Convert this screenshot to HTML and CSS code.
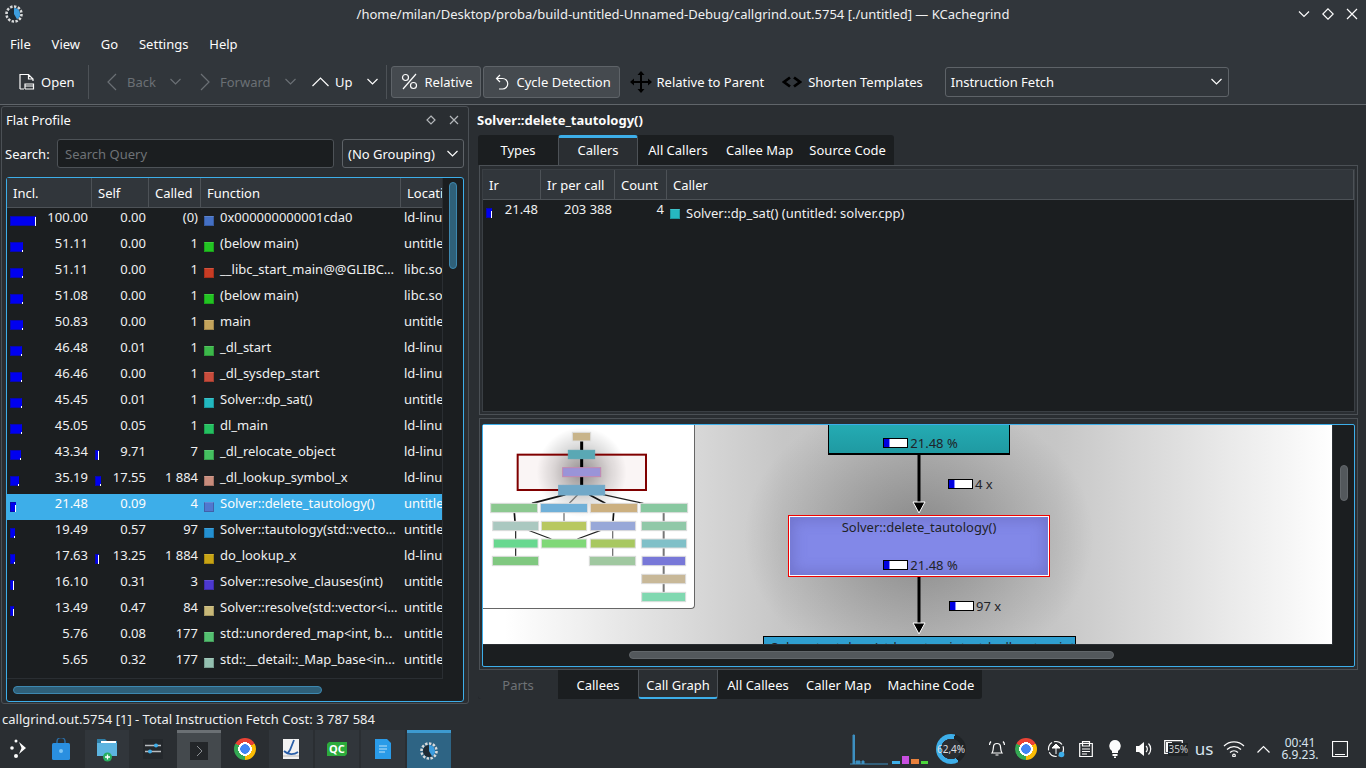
FILE: index.html
```html
<!DOCTYPE html>
<html lang="en">
<head>
    <meta charset="UTF-8">
    <title>KCachegrind</title>
    <link rel="stylesheet" href="styles.css">
</head>
<body>
    <header class="titlebar">
        <svg class="app-logo" width="20" height="20" viewBox="0 0 20 20">
            <circle cx="10" cy="10" r="7.5" fill="none" stroke="#d8dadb" stroke-width="2.6" stroke-dasharray="2.4 1.5"/>
            <circle cx="10" cy="10" r="6" fill="#1f2a33"/>
            <path d="M10 10V4a6 6 0 0 1 3 11.2z" fill="#3d9ee0"/>
        </svg>
        <div class="window-title">/home/milan/Desktop/proba/build-untitled-Unnamed-Debug/callgrind.out.5754 [./untitled] — KCachegrind</div>
        <div class="window-buttons">
            <svg width="12" height="12" viewBox="0 0 12 12"><path d="M1 3.5l5 5 5-5" class="line"/></svg>
            <svg width="12" height="12" viewBox="0 0 12 12"><path d="M6 .8L11.2 6 6 11.2.8 6z" class="line"/></svg>
            <svg width="12" height="12" viewBox="0 0 12 12"><path d="M1 1l10 10M11 1L1 11" class="line"/></svg>
        </div>
    </header>

    <nav class="menubar">
        <span>File</span><span>View</span><span>Go</span><span>Settings</span><span>Help</span>
    </nav>

    <div class="toolbar">
        <div class="tool tool-open">
            <svg width="16" height="18" viewBox="0 0 16 18"><path d="M1 16V1.500H9.500L14 6V8M9.500 1.500V6H14M1 16H5M6 16V11H14.500V16H6M6 13H14.500" class="line"/></svg>
            <span>Open</span>
        </div>
        <div class="tool-sep"></div>
        <div class="tool tool-back disabled">
            <svg width="12" height="18" viewBox="0 0 12 18"><path d="M9 1L1 9l8 8" class="line"/></svg>
            <span>Back</span>
            <svg class="drop" width="11" height="7" viewBox="0 0 11 7"><path d="M.5 1l5 5 5-5" class="line"/></svg>
        </div>
        <div class="tool tool-forward disabled">
            <svg width="12" height="18" viewBox="0 0 12 18"><path d="M1 1l8 8-8 8" class="line"/></svg>
            <span>Forward</span>
            <svg class="drop" width="11" height="7" viewBox="0 0 11 7"><path d="M.5 1l5 5 5-5" class="line"/></svg>
        </div>
        <div class="tool tool-up">
            <svg width="17" height="10" viewBox="0 0 17 10"><path d="M.5 9l8-8 8 8" class="line"/></svg>
            <span>Up</span>
            <svg class="drop" width="11" height="7" viewBox="0 0 11 7"><path d="M.5 1l5 5 5-5" class="line"/></svg>
        </div>
        <div class="tool-sep sep-second"></div>
        <div class="tool-toggle toggle-relative">
            <svg width="17" height="17" viewBox="0 0 17 17"><path d="M15 1L2 16" class="line"/><circle cx="4.500" cy="4.500" r="3" class="line"/><circle cx="12.500" cy="12.500" r="3" class="line"/></svg>
            <span>Relative</span>
        </div>
        <div class="tool-toggle toggle-cycle">
            <svg width="14" height="16" viewBox="0 0 14 16"><path d="M5 1L1.500 4.500 5 8M2 4.500H7.500a5 5 0 0 1 0 10.500H4" class="line"/></svg>
            <span>Cycle Detection</span>
        </div>
        <div class="tool tool-move">
            <svg width="22" height="22" viewBox="0 0 22 22"><path d="M11 2V20M2 11H20" class="dark-line"/><path d="M11 0l3.500 4h-7zM11 22l3.500-4h-7zM0 11l4-3.500v7zM22 11l-4-3.500v7z"/></svg>
            <span>Relative to Parent</span>
        </div>
        <div class="tool tool-shorten">
            <svg width="20" height="12" viewBox="0 0 20 12"><path d="M8 1.500L2 6l6 4.500M12 1.500L18 6l-6 4.500" class="dark-line bold-line"/></svg>
            <span>Shorten Templates</span>
        </div>
        <div class="combo toolbar-combo">
            <span>Instruction Fetch</span>
            <svg width="11" height="7" viewBox="0 0 11 7"><path d="M.5 1l5 5 5-5" class="line"/></svg>
        </div>
    </div>

    <main class="workspace">
        <section class="dock">
            <div class="dock-title">
                <span>Flat Profile</span>
                <svg width="10" height="10" viewBox="0 0 10 10"><path d="M5 1l4 4-4 4-4-4z" class="line"/></svg>
                <svg width="10" height="10" viewBox="0 0 10 10"><path d="M1 1l8 8M9 1L1 9" class="line"/></svg>
            </div>
            <div class="search-row">
                <label>Search:</label>
                <div class="search-input">Search Query</div>
                <div class="combo group-combo">
                    <span>(No Grouping)</span>
                    <svg width="11" height="7" viewBox="0 0 11 7"><path d="M.5 1l5 5 5-5" class="line"/></svg>
                </div>
            </div>
            <div class="profile-frame">
                <div class="profile-list">
                    <div class="profile-head">
                        <div>Incl.</div><div>Self</div><div>Called</div><div>Function</div><div>Location</div>
                    </div>
                    <div class="profile-row">
                        <div class="num"><i class="bar tip-tall" style="width:26px"></i><span>100.00</span></div>
                        <div class="num"><span>0.00</span></div><div class="num"><span>(0)</span></div>
                        <div class="fn"><i class="swatch" style="background:#4470c4"></i>0x000000000001cda0</div><div class="loc">ld-linux</div>
                    </div>
                    <div class="profile-row">
                        <div class="num"><i class="bar" style="width:13px"></i><span>51.11</span></div>
                        <div class="num"><span>0.00</span></div><div class="num"><span>1</span></div>
                        <div class="fn"><i class="swatch" style="background:#22c422"></i>(below main)</div><div class="loc">untitled</div>
                    </div>
                    <div class="profile-row">
                        <div class="num"><i class="bar" style="width:13px"></i><span>51.11</span></div>
                        <div class="num"><span>0.00</span></div><div class="num"><span>1</span></div>
                        <div class="fn"><i class="swatch" style="background:#c83c24"></i>__libc_start_main@@GLIBC…</div><div class="loc">libc.so</div>
                    </div>
                    <div class="profile-row">
                        <div class="num"><i class="bar" style="width:13px"></i><span>51.08</span></div>
                        <div class="num"><span>0.00</span></div><div class="num"><span>1</span></div>
                        <div class="fn"><i class="swatch" style="background:#22c422"></i>(below main)</div><div class="loc">libc.so</div>
                    </div>
                    <div class="profile-row">
                        <div class="num"><i class="bar" style="width:13px"></i><span>50.83</span></div>
                        <div class="num"><span>0.00</span></div><div class="num"><span>1</span></div>
                        <div class="fn"><i class="swatch" style="background:#c4a45c"></i>main</div><div class="loc">untitled</div>
                    </div>
                    <div class="profile-row">
                        <div class="num"><i class="bar" style="width:12px"></i><span>46.48</span></div>
                        <div class="num"><span>0.01</span></div><div class="num"><span>1</span></div>
                        <div class="fn"><i class="swatch" style="background:#3cb84a"></i>_dl_start</div><div class="loc">ld-linux</div>
                    </div>
                    <div class="profile-row">
                        <div class="num"><i class="bar" style="width:12px"></i><span>46.46</span></div>
                        <div class="num"><span>0.00</span></div><div class="num"><span>1</span></div>
                        <div class="fn"><i class="swatch" style="background:#c84c3c"></i>_dl_sysdep_start</div><div class="loc">ld-linux</div>
                    </div>
                    <div class="profile-row">
                        <div class="num"><i class="bar" style="width:12px"></i><span>45.45</span></div>
                        <div class="num"><span>0.01</span></div><div class="num"><span>1</span></div>
                        <div class="fn"><i class="swatch" style="background:#22b8c0"></i>Solver::dp_sat()</div><div class="loc">untitled</div>
                    </div>
                    <div class="profile-row">
                        <div class="num"><i class="bar" style="width:12px"></i><span>45.05</span></div>
                        <div class="num"><span>0.05</span></div><div class="num"><span>1</span></div>
                        <div class="fn"><i class="swatch" style="background:#24c060"></i>dl_main</div><div class="loc">ld-linux</div>
                    </div>
                    <div class="profile-row">
                        <div class="num"><i class="bar" style="width:11px"></i><span>43.34</span></div>
                        <div class="num"><i class="bar tip-tall" style="width:4px"></i><span>9.71</span></div><div class="num"><span>7</span></div>
                        <div class="fn"><i class="swatch" style="background:#44c060"></i>_dl_relocate_object</div><div class="loc">ld-linux</div>
                    </div>
                    <div class="profile-row">
                        <div class="num"><i class="bar" style="width:9px"></i><span>35.19</span></div>
                        <div class="num"><i class="bar" style="width:6px"></i><span>17.55</span></div><div class="num"><span>1 884</span></div>
                        <div class="fn"><i class="swatch" style="background:#c88c7c"></i>_dl_lookup_symbol_x</div><div class="loc">ld-linux</div>
                    </div>
                    <div class="profile-row selected">
                        <div class="num"><i class="bar tip-mid" style="width:6px"></i><span>21.48</span></div>
                        <div class="num"><span>0.09</span></div><div class="num"><span>4</span></div>
                        <div class="fn"><i class="swatch" style="background:#5078d0"></i>Solver::delete_tautology()</div><div class="loc">untitled</div>
                    </div>
                    <div class="profile-row">
                        <div class="num"><i class="bar" style="width:5px"></i><span>19.49</span></div>
                        <div class="num"><span>0.57</span></div><div class="num"><span>97</span></div>
                        <div class="fn"><i class="swatch" style="background:#2490d0"></i>Solver::tautology(std::vecto…</div><div class="loc">untitled</div>
                    </div>
                    <div class="profile-row">
                        <div class="num"><i class="bar" style="width:5px"></i><span>17.63</span></div>
                        <div class="num"><i class="bar tip-tall" style="width:4px"></i><span>13.25</span></div><div class="num"><span>1 884</span></div>
                        <div class="fn"><i class="swatch" style="background:#c8a414"></i>do_lookup_x</div><div class="loc">ld-linux</div>
                    </div>
                    <div class="profile-row">
                        <div class="num"><i class="bar tip-tall" style="width:4px"></i><span>16.10</span></div>
                        <div class="num"><span>0.31</span></div><div class="num"><span>3</span></div>
                        <div class="fn"><i class="swatch" style="background:#4c38d0"></i>Solver::resolve_clauses(int)</div><div class="loc">untitled</div>
                    </div>
                    <div class="profile-row">
                        <div class="num"><i class="bar tip-mid" style="width:4px"></i><span>13.49</span></div>
                        <div class="num"><span>0.47</span></div><div class="num"><span>84</span></div>
                        <div class="fn"><i class="swatch" style="background:#c8b878"></i>Solver::resolve(std::vector&lt;i…</div><div class="loc">untitled</div>
                    </div>
                    <div class="profile-row">
                        <div class="num"><span>5.76</span></div>
                        <div class="num"><span>0.08</span></div><div class="num"><span>177</span></div>
                        <div class="fn"><i class="swatch" style="background:#54c070"></i>std::unordered_map&lt;int, b…</div><div class="loc">untitled</div>
                    </div>
                    <div class="profile-row">
                        <div class="num"><span>5.65</span></div>
                        <div class="num"><span>0.32</span></div><div class="num"><span>177</span></div>
                        <div class="fn"><i class="swatch" style="background:#94c0b0"></i>std::__detail::_Map_base&lt;in…</div><div class="loc">untitled</div>
                    </div>
                </div>
                <div class="profile-vscroll"><div class="thumb-blue"></div></div>
                <div class="profile-hscroll"><div class="thumb-blue"></div></div>
            </div>
        </section>

        <section class="details">
            <div class="details-title">Solver::delete_tautology()</div>
            <div class="tabs tabs-top">
                <div class="tab">Types</div>
                <div class="tab active">Callers</div>
                <div class="tab">All Callers</div>
                <div class="tab">Callee Map</div>
                <div class="tab">Source Code</div>
            </div>
            <div class="panel panel-callers">
                <div class="callers-list">
                    <div class="callers-head">
                        <div>Ir</div><div>Ir per call</div><div>Count</div><div>Caller</div>
                    </div>
                    <div class="callers-row">
                        <div class="num"><i class="bar tip-mid" style="width:6px"></i><span>21.48</span></div>
                        <div class="num"><span>203 388</span></div>
                        <div class="num"><span>4</span></div>
                        <div class="caller-fn"><i class="swatch" style="background:#26b8c0"></i>Solver::dp_sat() (untitled: solver.cpp)</div>
                    </div>
                </div>
            </div>
            <div class="panel panel-graph">
                <div class="graph-frame">
                    <div class="graph-view">
                        <div class="gnode gnode-top">
                            <div class="cost"><i class="cost-bar"><b></b></i>21.48 %</div>
                        </div>
                        <svg class="gedge edge-one" width="16" height="60" viewBox="0 0 16 60"><path d="M8 0V50" stroke="#000" stroke-width="3"/><path d="M2 47h12L8 58z" stroke="#fff" stroke-width="1"/></svg>
                        <div class="glabel label-one"><i class="cost-bar"><b></b></i>4 x</div>
                        <div class="gnode gnode-main">
                            <div class="gnode-name">Solver::delete_tautology()</div>
                            <div class="cost"><i class="cost-bar"><b></b></i>21.48 %</div>
                        </div>
                        <svg class="gedge edge-two" width="16" height="59" viewBox="0 0 16 59"><path d="M8 0V48" stroke="#000" stroke-width="3"/><path d="M2 46h12L8 57z" stroke="#fff" stroke-width="1"/></svg>
                        <div class="glabel label-two"><i class="cost-bar"><b></b></i>97 x</div>
                        <div class="gnode gnode-bottom">
                            <div class="gnode-name">Solver::tautology(std::vector&lt;int, std::allocator&lt;int&gt;&gt;)</div>
                        </div>
                        <div class="birdseye">
                            <svg width="211" height="183" viewBox="9 15 633 549">
                                <defs>
                                    <radialGradient id="glow"><stop offset="0" stop-color="#000" stop-opacity=".42"/><stop offset=".6" stop-color="#000" stop-opacity=".14"/><stop offset="1" stop-color="#000" stop-opacity="0"/></radialGradient>
                                </defs>
                                <circle cx="305" cy="157" r="135" fill="url(#glow)"/>
                                <rect x="113" y="104" width="385" height="106" fill="#800000" fill-opacity=".04" stroke="#800000" stroke-width="6"/>
                                <g class="mini-graph">
                                    <path d="M305 63V91M305 116V143M305 170V196" stroke="#000" stroke-width="9"/>
                                    <path d="M256 224L156 250M328 224L376 250M103 278L105 304M401 278L399 304" stroke="#111" stroke-width="5"/>
                                    <path d="M370 224L490 250M107 332V357M143 330L214 357M362 331L292 357M107 384V409" stroke="#222" stroke-width="3.500"/>
                                    <path d="M293 224L268 250M252 278V304M398 332V357M398 384V409" stroke="#777" stroke-width="4"/>
                                    <path d="M551 278V517" stroke="#777" stroke-width="6"/>
                                    <g stroke="#ddd" stroke-width="3">
                                        <rect x="277" y="37" width="55" height="26" fill="#c8b48a"/>
                                        <rect x="265" y="91" width="79" height="25" fill="#5aa8b4" stroke="#5aa8b4"/>
                                        <rect x="248" y="143" width="114" height="27" fill="#9a94d8" stroke="#c488b0"/>
                                        <rect x="236" y="196" width="138" height="29" fill="#70a8c8" stroke="#70a8c8"/>
                                        <rect x="32" y="250" width="141" height="28" fill="#8cc890"/>
                                        <rect x="181" y="250" width="142" height="28" fill="#70b0d8"/>
                                        <rect x="331" y="250" width="142" height="28" fill="#ccb080"/>
                                        <rect x="481" y="250" width="142" height="28" fill="#88c8a0"/>
                                        <rect x="38" y="304" width="138" height="28" fill="#aac8c0"/>
                                        <rect x="184" y="304" width="136" height="28" fill="#b8c860"/>
                                        <rect x="331" y="304" width="136" height="28" fill="#98a8d8"/>
                                        <rect x="484" y="304" width="136" height="28" fill="#90c8a8"/>
                                        <rect x="40" y="357" width="134" height="27" fill="#68d890"/>
                                        <rect x="184" y="357" width="136" height="27" fill="#80d878"/>
                                        <rect x="331" y="357" width="135" height="27" fill="#a8c860"/>
                                        <rect x="484" y="357" width="136" height="27" fill="#80c0c8"/>
                                        <rect x="37" y="409" width="139" height="28" fill="#80c880"/>
                                        <rect x="328" y="409" width="139" height="28" fill="#a0c8a0"/>
                                        <rect x="486" y="409" width="131" height="28" fill="#7878d8"/>
                                        <rect x="485" y="463" width="132" height="28" fill="#c8b898"/>
                                        <rect x="485" y="517" width="132" height="28" fill="#80d8b0"/>
                                    </g>
                                </g>
                            </svg>
                        </div>
                    </div>
                    <div class="graph-vscroll"><div class="thumb-gray"></div></div>
                    <div class="graph-hscroll"><div class="thumb-gray"></div></div>
                </div>
            </div>
            <div class="tabs tabs-bottom">
                <div class="tab disabled">Parts</div>
                <div class="tab">Callees</div>
                <div class="tab active">Call Graph</div>
                <div class="tab">All Callees</div>
                <div class="tab">Caller Map</div>
                <div class="tab">Machine Code</div>
            </div>
        </section>
    </main>

    <div class="statusbar">callgrind.out.5754 [1] - Total Instruction Fetch Cost: 3 787 584</div>

    <footer class="taskbar">
        <div class="launcher">
            <svg width="18" height="22" viewBox="0 0 18 22" fill="#fcfcfc"><circle cx="3" cy="10" r="1.800"/><circle cx="7" cy="3" r="1.500"/><circle cx="7" cy="18" r="2"/><path d="M10 4l7 6-7 6 2.500-6z"/></svg>
        </div>
        <div class="task">
            <svg width="20" height="22" viewBox="0 0 20 22"><path d="M6 6V3.500a4 4 0 0 1 8 0V6" fill="none" stroke="#2a6fa8" stroke-width="1.500"/><rect x="1" y="5" width="18" height="17" rx="1.500" fill="#2a8fe0"/><circle cx="10" cy="13" r="2" fill="#7cc4f4"/></svg>
        </div>
        <div class="task tile">
            <svg width="22" height="26" viewBox="0 0 22 26"><path d="M1 3h8l2 2h10v15H1z" fill="#2f7fa8"/><rect x="1" y="7" width="20" height="13" fill="#5cb4e0"/><rect x="5" y="5" width="15" height="2" fill="#fff"/><circle cx="11.500" cy="21" r="4.500" fill="#27ae60"/><path d="M11.500 18.500v5M9 21h5" stroke="#fff" stroke-width="1.300"/></svg>
        </div>
        <div class="task">
            <svg width="20" height="20" viewBox="0 0 20 20"><rect width="20" height="20" fill="#24282c"/><path d="M2 6.500H18M2 12.500H18" stroke="#b8bcc0" stroke-width="1.500"/><circle cx="13" cy="6.500" r="2" fill="#3daee9"/><circle cx="7" cy="12.500" r="2" fill="#3daee9"/></svg>
        </div>
        <div class="task tile tile-open">
            <svg width="18" height="18" viewBox="0 0 18 18"><rect width="18" height="18" fill="#232629"/><path d="M7 4l5 5-5 5" fill="none" stroke="#8a8e92"/></svg>
        </div>
        <div class="task"><i class="chrome"></i></div>
        <div class="task tile">
            <svg width="16" height="20" viewBox="0 0 16 20"><rect width="16" height="20" fill="#f2f2f2"/><path d="M11 1L7 11 4 15M1 12c4 4 10 4 14 1" fill="none" stroke="#2a5fa8" stroke-width="1.800"/><path d="M0 17h16" stroke="#b8b8b8"/></svg>
        </div>
        <div class="task tile">
            <svg width="20" height="14" viewBox="0 0 20 14"><path d="M2 0h18v12l-2 2H0V2z" fill="#2caa3c"/><text x="10" y="11" class="qc-text">QC</text></svg>
        </div>
        <div class="task tile">
            <svg width="16" height="20" viewBox="0 0 16 20"><path d="M0 0h12l4 4v16H0z" fill="#2a9be8"/><path d="M4 7h8M4 10h8M4 13h6" stroke="#bfe2f8"/></svg>
        </div>
        <div class="task tile tile-active">
            <svg width="20" height="20" viewBox="0 0 20 20">
                <circle cx="10" cy="10" r="7.500" fill="none" stroke="#d8dadb" stroke-width="2.600" stroke-dasharray="2.400 1.500"/>
                <circle cx="10" cy="10" r="6" fill="#1f2a33"/>
                <path d="M10 10V4a6 6 0 0 1 3 11.200z" fill="#3d9ee0"/>
            </svg>
        </div>

        <div class="tray">
            <svg class="cpu-graph" width="38" height="34" viewBox="0 0 38 34"><path d="M0 32H38M3 32V3h1.500V32M6 32v-3h4v3M12 32v-3h2v3" fill="#3d8fc0" stroke="#3d8fc0"/></svg>
            <div class="mem-bars">
                <i class="mem-blue"></i><i class="mem-pink"></i><i class="mem-orange"></i><i class="mem-green"></i>
            </div>
            <div class="gauge"><span>62,4%</span></div>
            <div class="tray-icons">
                <svg width="16" height="18" viewBox="0 0 16 18"><path d="M3 13c1.500-2 1-4 1.500-6a3.500 3.500 0 0 1 7 0c.5 2 0 4 1.500 6zM6.500 15h3M2 1.500A5 5 0 0 0 .5 5M14 1.500A5 5 0 0 1 15.500 5" class="line"/></svg>
                <i class="chrome"></i>
                <svg width="18" height="18" viewBox="0 0 18 18"><circle cx="9" cy="9" r="7.500" class="line" stroke-dasharray="9 2"/><path d="M9 14V7M9 4l4 4H5z" fill="#fcfcfc" stroke="#fcfcfc"/><circle cx="14.500" cy="14.500" r="2.800" fill="#3daee9"/></svg>
                <svg width="14" height="16" viewBox="0 0 14 16"><path d="M.7 2.500h12.600v13H.7zM3.500 5h7V.7h-7zM3 8h8M3 10.500h8M3 13h5" class="line"/></svg>
                <svg width="12" height="18" viewBox="0 0 12 18" fill="#fcfcfc"><path d="M6 0a6 6 0 0 1 3 11v2H3v-2A6 6 0 0 1 6 0zM3.500 14h5v2h-5zM5 16.500h2V18H5z"/></svg>
                <svg width="17" height="16" viewBox="0 0 17 16"><path d="M0 5h3l5-4v14l-5-4H0z" fill="#fcfcfc"/><path d="M10 5a4 4 0 0 1 0 6M12.500 2.500a8 8 0 0 1 0 11" class="line"/></svg>
                <div class="battery">
                    <svg width="19" height="14" viewBox="0 0 19 14"><path d="M.7.7h17.600v12.600H.7z" class="line"/><rect x="2" y="2" width="6" height="10" fill="#fcfcfc"/></svg>
                    <span>35%</span>
                </div>
                <span class="layout-label">us</span>
                <svg width="22" height="16" viewBox="0 0 22 16"><path d="M1 5a14 14 0 0 1 20 0M4 8.500a10 10 0 0 1 14 0M7 11.500a6 6 0 0 1 8 0" class="line"/><circle cx="11" cy="14.500" r="1.300" class="line"/></svg>
                <svg width="13" height="8" viewBox="0 0 13 8"><path d="M.5 7.500l6-6 6 6" class="line"/></svg>
            </div>
            <div class="clock"><div>00:41</div><div>6.9.23.</div></div>
            <svg class="show-desktop" width="16" height="16" viewBox="0 0 16 16"><path d="M.5.500h15v15H.5zM3 13.500h10" class="line"/></svg>
        </div>
    </footer>
</body>
</html>
```

FILE: styles.css
```css
* {
    box-sizing: border-box;
}
html, body {
    margin: 0;
    height: 768px;
    overflow: hidden;
}
body {
    width: 1366px;
    display: flex;
    flex-direction: column;
    font-family: "Noto Sans", sans-serif;
    font-size: 13px;
    line-height: 18px;
    color: #fcfcfc;
    background: #2a2e32;
}
i {
    display: block;
    font-style: normal;
}
svg {
    display: block;
    flex: none;
}
.line {
    fill: none;
    stroke: #fcfcfc;
    stroke-width: 1.2;
}
.dark-line {
    fill: none;
    stroke: #000;
    stroke-width: 2;
}
.bold-line {
    stroke-width: 2.8;
}

/* title bar */
.titlebar {
    height: 30px;
    display: flex;
    align-items: center;
    padding: 0 8px 2px 4px;
    background: #31363b;
}
.window-title {
    flex: 1;
    text-align: center;
    padding-left: 44px;
    color: #eff0f1;
}
.window-buttons {
    display: flex;
    gap: 12px;
}

/* menu */
.menubar {
    height: 30px;
    display: flex;
    align-items: center;
    padding: 0 0 2px 10px;
    gap: 20.8px;
    background: #31363b;
}

/* toolbar */
.toolbar {
    height: 45px;
    display: flex;
    align-items: center;
    padding: 0 0 1px 19px;
    background: #31363b;
    border-bottom: 1px solid #60656a;
}
.tool {
    display: flex;
    align-items: center;
}
.tool.disabled {
    color: #6b7075;
}
.tool.disabled .line {
    stroke: #6b7075;
}
.tool-open {
    gap: 6px;
    width: 55px;
}
.tool-sep {
    width: 1px;
    height: 34px;
    margin: 0 18px 0 14px;
    background: #4d5257;
}
.tool-back svg:first-child, .tool-forward svg:first-child {
    margin-right: 8px;
}
.tool-back .drop, .tool-forward .drop {
    margin-left: 14px;
}
.tool-back {
    width: 93px;
}
.tool-forward {
    width: 112px;
}
.tool-up {
    gap: 6px;
}
.tool-up .drop {
    margin-left: 8px;
}
.sep-second {
    margin: 0 4px 0 8px;
}
.tool-toggle {
    height: 32px;
    display: flex;
    align-items: center;
    background: #454a4f;
    border: 1px solid #5e6368;
    border-radius: 3px;
}
.toggle-relative {
    width: 90px;
    padding-left: 9px;
    gap: 7px;
}
.toggle-cycle {
    width: 137px;
    margin-left: 2px;
    padding-left: 11px;
    gap: 8px;
}
.tool-move {
    margin-left: 10px;
    gap: 5px;
}
.tool-shorten {
    margin-left: 18px;
    gap: 6px;
}
.combo {
    display: flex;
    align-items: center;
    justify-content: space-between;
    border: 1px solid #5e6368;
    border-radius: 3px;
    background: #31363b;
}
.toolbar-combo {
    width: 284px;
    height: 30px;
    margin-left: 22px;
    padding: 0 6px 0 5px;
}

/* main area */
.workspace {
    height: 603px;
    display: flex;
}
.dock {
    width: 468px;
    height: 598px;
    margin: 1px 0 0 1px;
    display: flex;
    flex-direction: column;
    border: 1px solid #4b5055;
    border-radius: 3px;
}
.dock-title {
    height: 25px;
    display: flex;
    align-items: center;
    gap: 13px;
    padding: 0 9px 0 4px;
}
.dock-title span {
    flex: 1;
}
.dock-title .line {
    stroke: #b4b7ba;
}
.search-row {
    height: 29px;
    margin: 7px 4px 0 3px;
    display: flex;
    align-items: center;
}
.search-input {
    width: 277px;
    height: 29px;
    margin-left: 6px;
    padding: 5px 7px;
    background: #1b1e20;
    color: #6e7276;
    border: 1px solid #4d5257;
    border-radius: 3px;
}
.search-row label {
    width: 46px;
}
.group-combo {
    width: 122px;
    height: 29px;
    margin-left: 8px;
    padding: 0 5px;
    background: #2a2e32;
}
.profile-frame {
    margin: 9px 3px 0 4px;
    width: 458px;
    height: 525px;
    display: grid;
    grid-template-columns: 436px 20px;
    grid-template-rows: 501px 22px;
    background: #1b1e20;
    border: 1px solid #3daee9;
    border-radius: 3px;
}
.profile-list {
    border-right: 1px solid #2a2e32;
    border-bottom: 1px solid #2a2e32;
    overflow: hidden;
}
.profile-head, .profile-row {
    display: grid;
    grid-template-columns: 85px 57px 52px 200px 42px;
}
.profile-head {
    height: 30px;
    background: #31363b;
    border-bottom: 1px solid #4d5257;
}
.profile-head div, .callers-head div {
    padding: 6px 5px 0 6px;
    border-right: 1px solid #4d5257;
    white-space: nowrap;
    overflow: hidden;
}
.profile-head div:last-child {
    padding-right: 0;
}
.profile-row {
    height: 26px;
    color: #eff0f1;
}
.profile-row.selected {
    background: #3daee9;
    color: #fcfcfc;
}
.num {
    display: flex;
    justify-content: space-between;
    padding: 0 3px;
}
.profile-row .num:first-child {
    padding-right: 4px;
}
.num span {
    margin-left: auto;
    white-space: nowrap;
}
.bar {
    position: relative;
    height: 10px;
    margin-top: 8px;
    background: #0000f0;
    border: 1px solid #0808b0;
    border-right-color: #0000f0;
    flex: none;
}
.bar::after {
    content: "";
    position: absolute;
    right: -1px;
    bottom: -1px;
    width: 1px;
    height: 2px;
    background: #fff;
}
.bar.tip-mid::after {
    height: 7px;
}
.bar.tip-tall::after {
    height: 9px;
}
.fn, .caller-fn {
    display: flex;
    padding-left: 3px;
    white-space: nowrap;
    overflow: hidden;
}
.swatch {
    flex: none;
    width: 10px;
    height: 10px;
    margin: 8px 6px 0 0;
    border: 1px solid rgba(0, 0, 0, 0.18);
    border-top-color: rgba(255, 255, 255, 0.12);
}
.loc {
    padding-left: 3px;
    white-space: nowrap;
    overflow: hidden;
}
.profile-vscroll {
    padding: 4px 0 0 6px;
    grid-row: 1 / 3;
    grid-column: 2;
}
.profile-vscroll .thumb-blue {
    width: 8px;
    height: 87px;
}
.profile-hscroll {
    padding: 7px 0 0 6px;
}
.profile-hscroll .thumb-blue {
    width: 309px;
    height: 8px;
}
.thumb-blue {
    background: #2f6079;
    border: 1px solid #3d88b0;
    border-radius: 4px;
}

/* right side */
.details {
    flex: 1;
    padding: 0 8px 0 9px;
    min-width: 0;
}
.details-title {
    height: 30px;
    padding-top: 6px;
    font-weight: 700;
    margin-left: -1px;
}
.tabs {
    display: flex;
    width: max-content;
    height: 30px;
    background: #1b1e20;
}
.tabs-top {
    border-radius: 3px 3px 0 0;
}
.tabs-bottom {
    height: 29px;
    border-radius: 0 0 3px 3px;
}
.tab {
    min-width: 80px;
    padding: 6px 8px 0;
    text-align: center;
    white-space: nowrap;
}
.tab.disabled {
    color: #6e7276;
    background: #2a2e32;
}
.tab.active {
    background: #2a2e32;
    border: 1px solid #4d5257;
    border-top: 3px solid #3daee9;
    border-bottom: 0;
    padding-top: 3px;
    border-radius: 3px 3px 0 0;
}
.tabs-bottom .tab.active {
    border: 1px solid #4d5257;
    border-bottom: 2px solid #3daee9;
    border-top: 0;
    padding: 6px 7px 0;
    border-radius: 0 0 3px 3px;
}
.tabs-bottom .tab.disabled {
    border-radius: 0 0 0 3px;
}
.panel {
    margin-left: 1px;
    border: 1px solid #4b5055;
    padding: 3px 2px 2px;
}
.panel-callers {
    height: 250px;
}
.callers-list {
    height: 100%;
    background: #1b1e20;
    border: 1px solid #3a3f44;
}
.callers-head, .callers-row {
    display: grid;
    grid-template-columns: 58px 74px 52px 1fr;
}
.callers-head {
    height: 30px;
    background: #31363b;
    border-bottom: 1px solid #4d5257;
}
.callers-row {
    height: 26px;
    color: #eff0f1;
}
.callers-row .caller-fn {
    padding-top: 4px;
}
.callers-row .swatch {
    margin-top: 5px;
    margin-right: 6px;
}
.panel-graph {
    height: 252px;
    margin-top: 3px;
    padding: 5px 2px 2px;
}
.graph-frame {
    height: 243px;
    display: grid;
    grid-template-columns: 850px 1fr;
    grid-template-rows: 220px 1fr;
    background: #1b1e20;
    border: 1px solid #3daee9;
    border-radius: 2px;
}

/* call graph canvas */
.graph-view {
    position: relative;
    overflow: hidden;
    color: #1f2328;
    border-right: 1px solid #2a2e32;
    border-bottom: 1px solid #2a2e32;
    background:
        radial-gradient(ellipse 175px 140px at 436px 112px, rgba(0, 0, 0, 0.3), rgba(0, 0, 0, 0.12) 60%, rgba(0, 0, 0, 0) 100%),
        linear-gradient(90deg, #fff 22px, #c6c6c6 300px, #c0c0c0 436px, #c6c6c6 572px, #fff 850px);
}
.gnode {
    position: absolute;
    text-align: center;
}
.cost, .glabel {
    display: flex;
    align-items: center;
    gap: 2px;
}
.cost {
    justify-content: center;
    position: absolute;
    left: 0;
    right: 0;
    padding-left: 3px;
}
.cost-bar {
    width: 25px;
    height: 10px;
    border: 1px solid #000;
    background: #fff;
}
.cost-bar b {
    display: block;
    width: 6px;
    height: 100%;
    background: #0000e0;
    border-right: 1px solid #8888ff;
}
.gnode-top {
    left: 345px;
    top: -10px;
    width: 182px;
    height: 40px;
    background: linear-gradient(#26b0b8, #1f9aa2);
    border: 1px solid #000;
    border-bottom-width: 2px;
}
.gnode-top .cost {
    bottom: 1px;
}
.gnode-main {
    left: 305px;
    top: 90px;
    width: 262px;
    height: 62px;
    background: #8288e8;
    border: 1px solid #f00000;
    outline: 1px solid #fff;
    outline-offset: -2px;
    box-shadow: inset 0 0 14px 4px rgba(90, 90, 170, 0.45);
}
.gnode-main .gnode-name {
    margin-top: 2px;
}
.gnode-main .cost {
    bottom: 2px;
}
.gnode-bottom {
    left: 280px;
    top: 211px;
    width: 313px;
    height: 40px;
    padding: 1px 0 0 7px;
    overflow: hidden;
    text-align: left;
    background: #2f9fd0;
    border: 1px solid #000;
    white-space: nowrap;
}
.gedge {
    position: absolute;
    left: 428px;
}
.edge-one {
    top: 30px;
}
.edge-two {
    top: 152px;
}
.glabel {
    position: absolute;
}
.label-one {
    left: 465px;
    top: 50px;
}
.label-two {
    left: 466px;
    top: 172px;
}
.birdseye {
    position: absolute;
    left: 0;
    top: 0;
    width: 212px;
    height: 184px;
    background: #fff;
    border-right: 1px solid #666;
    border-bottom: 1px solid #666;
    border-radius: 0 0 4px 0;
}
.mini-graph {
    filter: blur(0.4px);
}
.graph-vscroll {
    padding: 40px 0 0 7px;
}
.graph-hscroll {
    padding: 6px 0 0 146px;
}
.thumb-gray {
    background: #53585c;
    border: 1px solid #62676b;
    border-radius: 4px;
}
.graph-vscroll .thumb-gray {
    width: 8px;
    height: 36px;
}
.graph-hscroll .thumb-gray {
    width: 485px;
    height: 8px;
}

/* status */
.statusbar {
    height: 22px;
    padding: 2px 0 0 2px;
    background: #2a2e32;
    color: #eff0f1;
}

/* task manager */
.taskbar {
    height: 38px;
    display: flex;
    align-items: stretch;
    gap: 2px;
    background: #2a2e32;
}
.launcher {
    width: 37px;
    display: flex;
    align-items: center;
    padding-left: 9px;
}
.task {
    width: 44px;
    display: flex;
    align-items: center;
    justify-content: center;
}
.tile {
    background: #31363b;
}
.tile-open {
    background: #44494d;
    border-top: 3px solid #6b7074;
}
.tile-active {
    background: #2e6484;
    border-top: 3px solid #3d9ad0;
}
.chrome {
    width: 22px;
    height: 22px;
    border-radius: 50%;
    background:
        radial-gradient(circle, #4285f4 0 30%, #fff 31% 43%, transparent 44%),
        conic-gradient(#ea4335 0 60deg, #fbbc05 60deg 180deg, #34a853 180deg 300deg, #ea4335 300deg);
}
.qc-text {
    font-family: "Noto Sans", sans-serif;
    font-size: 11px;
    font-weight: 700;
    fill: #fff;
    text-anchor: middle;
}
.tray {
    margin-left: auto;
    display: flex;
    align-items: center;
    padding-right: 18px;
}
.mem-bars {
    display: flex;
    align-items: flex-end;
    gap: 2px;
    height: 34px;
    padding-bottom: 2px;
    margin-left: 4px;
}
.mem-bars i {
    width: 7.500px;
}
.mem-blue {
    height: 3px;
    background: #3daee9;
}
.mem-pink {
    height: 8px;
    background: #c84fe0;
}
.mem-orange {
    height: 5px;
    background: #e8803c;
}
.mem-green {
    height: 3px;
    background: #4cd63c;
}
.gauge {
    width: 30px;
    height: 30px;
    margin-left: 8px;
    border-radius: 50%;
    display: flex;
    align-items: center;
    justify-content: center;
    font-size: 10px;
    color: #dcdee0;
    background:
        radial-gradient(circle, #2a2e32 0 10px, transparent 10.500px),
        conic-gradient(from 150deg, #3daee9 0 225deg, #1f2326 225deg);
}
.tray-icons {
    display: grid;
    grid-template-columns: repeat(10, 29.6px);
    align-items: center;
    justify-items: center;
    margin-left: 16px;
}
.battery {
    position: relative;
    width: 20px;
    height: 18px;
}
.battery span {
    position: absolute;
    left: 4px;
    top: 3px;
    font-size: 10px;
    color: #c8cacc;
    background: #1f2326;
    line-height: 13px;
}
.layout-label {
    font-size: 17px;
    color: #d8e4ee;
}
.clock {
    width: 48px;
    margin-left: -2px;
    text-align: center;
    font-size: 12px;
    line-height: 12px;
    color: #d8e4ee;
}
.show-desktop {
    margin-left: 8px;
}
```
